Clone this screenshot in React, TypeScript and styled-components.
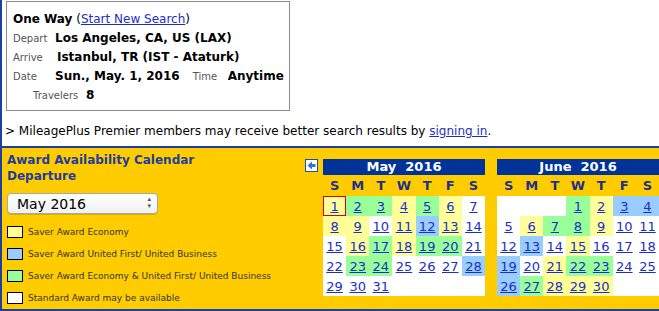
import React from 'react';
import styled, { createGlobalStyle } from 'styled-components';

const GlobalStyle = createGlobalStyle`
  html, body {
    margin: 0;
    padding: 0;
    background: #fff;
  }
  body {
    font-family: 'DejaVu Sans', Verdana, sans-serif;
    color: #000;
  }
`;

type Tone = 'y' | 'g' | 'b' | 'w';

const toneColor: Record<Tone, string> = {
  y: '#ffff99',
  g: '#99ff99',
  b: '#99ccff',
  w: '#ffffff',
};

interface MonthData {
  title: string;
  offset: number;
  days: Tone[];
  selected?: number;
}

const may: MonthData = {
  title: 'May\u00a0\u00a02016',
  offset: 0,
  selected: 1,
  days: [
    'y', 'g', 'g', 'y', 'g', 'y', 'w',
    'y', 'y', 'w', 'y', 'b', 'y', 'w',
    'w', 'y', 'g', 'y', 'g', 'g', 'w',
    'w', 'g', 'g', 'w', 'w', 'w', 'b',
    'w', 'w', 'w',
  ],
};

const june: MonthData = {
  title: 'June\u00a0\u00a02016',
  offset: 3,
  days: [
    'g', 'y', 'b', 'b',
    'w', 'y', 'g', 'g', 'y', 'w', 'w',
    'w', 'b', 'w', 'y', 'w', 'w', 'w',
    'b', 'w', 'y', 'g', 'g', 'w', 'w',
    'b', 'g', 'y', 'y', 'y',
  ],
};

const legend: { tone: Tone; label: string }[] = [
  { tone: 'y', label: 'Saver Award Economy' },
  { tone: 'b', label: 'Saver Award United First/ United Business' },
  { tone: 'g', label: 'Saver Award Economy & United First/ United Business' },
  { tone: 'w', label: 'Standard Award may be available' },
];

const weekDays = ['S', 'M', 'T', 'W', 'T', 'F', 'S'];

const Month: React.FC<{ data: MonthData }> = ({ data }) => {
  const blanks = Array.from({ length: data.offset });
  return (
    <MonthTable>
      <MonthHeader>{data.title}</MonthHeader>
      <WeekRow>
        {weekDays.map((d, i) => (
          <WeekDay key={i}>{d}</WeekDay>
        ))}
      </WeekRow>
      <DayGrid>
        {blanks.map((_, i) => (
          <DayCell key={'b' + i} $tone="w" />
        ))}
        {data.days.map((tone, i) => (
          <DayCell key={i} $tone={tone} $selected={data.selected === i + 1}>
            <DayLink href="#">{i + 1}</DayLink>
          </DayCell>
        ))}
      </DayGrid>
    </MonthTable>
  );
};

const PrevIcon = () => (
  <svg width="13" height="13" viewBox="0 0 13 13">
    <rect x="0.5" y="0.5" width="12" height="12" fill="#ffffff" stroke="#1f4fae" />
    <path d="M2.5 6.5 L7 2.5 L7 5 L10.5 5 L10.5 8 L7 8 L7 10.5 Z" fill="#2f6fd6" />
  </svg>
);

const App: React.FC = () => {
  return (
    <Page>
      <GlobalStyle />
      <SummaryBox>
        <Line>
          <Strong>One Way</Strong>
          <span>
            &nbsp;(<BlueLink href="#">Start New Search</BlueLink>)
          </span>
        </Line>
        <Line>
          <Label $width={42}>Depart</Label>
          <Strong>Los Angeles, CA, US (LAX)</Strong>
        </Line>
        <Line>
          <Label $width={44}>Arrive</Label>
          <Strong>Istanbul, TR (IST - Ataturk)</Strong>
        </Line>
        <Line>
          <Label $width={42}>Date</Label>
          <Strong>Sun., May. 1, 2016</Strong>
          <Label $width={35} $indent={13}>Time</Label>
          <Strong>Anytime</Strong>
        </Line>
        <Line>
          <Label $width={53} $indent={20}>Travelers</Label>
          <Strong>8</Strong>
        </Line>
      </SummaryBox>

      <Notice>
        &gt; MileagePlus Premier members may receive better search results by{' '}
        <BlueLink href="#">signing in</BlueLink>.
      </Notice>

      <Panel>
        <LeftColumn>
          <Title>
            Award Availability Calendar
            <br />
            Departure
          </Title>
          <SelectWrap>
            <MonthSelect defaultValue="May 2016">
              <option>May 2016</option>
              <option>June 2016</option>
            </MonthSelect>
            <SelectArrows>
              <span>▴</span>
              <span>▾</span>
            </SelectArrows>
          </SelectWrap>
          <Legend>
            {legend.map(item => (
              <LegendRow key={item.label}>
                <Swatch $tone={item.tone} />
                <span>{item.label}</span>
              </LegendRow>
            ))}
          </Legend>
        </LeftColumn>
        <Calendars>
          <IconSlot>
            <PrevIcon />
          </IconSlot>
          <Month data={may} />
          <Month data={june} />
        </Calendars>
      </Panel>
    </Page>
  );
};

export default App;

const Page = styled.div`
  min-height: 311px;
  border-left: 2px solid #1f3fa0;
  box-sizing: border-box;
  overflow: hidden;
`;

const SummaryBox = styled.div`
  width: 284px;
  box-sizing: border-box;
  margin: 1px 0 0 4px;
  padding: 8px 0 5px 6px;
  border: 1px solid #8c8c8c;
`;

const Line = styled.div`
  display: flex;
  align-items: baseline;
  height: 19px;
  line-height: 19px;
  font-size: 12px;
  white-space: nowrap;
`;

const Strong = styled.span`
  font-weight: bold;
  font-size: 12px;
`;

const Label = styled.span<{ $width: number; $indent?: number }>`
  display: inline-block;
  width: ${p => p.$width}px;
  margin-left: ${p => p.$indent || 0}px;
  font-size: 10px;
  color: #555;
`;

const BlueLink = styled.a`
  color: #1a2ec9;
  text-decoration: underline;
`;

const Notice = styled.div`
  margin-top: 12px;
  padding-left: 3px;
  font-size: 12px;
  line-height: 16px;
  white-space: nowrap;
`;

const Panel = styled.div`
  display: flex;
  margin-top: 7px;
  height: 165px;
  box-sizing: border-box;
  background: #ffcc00;
  border-top: 2px solid #1f3fa0;
  border-bottom: 2px solid #1f3fa0;
`;

const LeftColumn = styled.div`
  width: 298px;
  padding: 4px 0 0 5px;
`;

const Title = styled.div`
  font-size: 12px;
  line-height: 16px;
  font-weight: bold;
  color: #1d3c9e;
`;

const SelectWrap = styled.div`
  position: relative;
  width: 151px;
  margin-top: 9px;
`;

const MonthSelect = styled.select`
  appearance: none;
  display: block;
  width: 151px;
  height: 21px;
  padding: 0 0 0 9px;
  border: 1px solid #a8a8a8;
  border-radius: 4px;
  background: linear-gradient(#ffffff, #f1f1f1);
  font-family: 'DejaVu Sans', Verdana, sans-serif;
  font-size: 14px;
  color: #000;
  box-shadow: 0 1px 0 rgba(0, 0, 0, 0.15);
`;

const SelectArrows = styled.span`
  position: absolute;
  right: 7px;
  top: 3px;
  display: flex;
  flex-direction: column;
  font-size: 7px;
  line-height: 7px;
  color: #555;
  pointer-events: none;
`;

const Legend = styled.div`
  margin-top: 7px;
`;

const LegendRow = styled.div`
  display: flex;
  align-items: center;
  height: 22px;
  gap: 5px;
  font-size: 9px;
  color: #333;
`;

const Swatch = styled.span<{ $tone: Tone }>`
  width: 14px;
  height: 10px;
  border: 1px solid #000;
  background: ${p => toneColor[p.$tone]};
`;

const Calendars = styled.div`
  display: flex;
  align-items: flex-start;
  padding-top: 11px;
  gap: 12px;
`;

const IconSlot = styled.div`
  display: flex;
  margin-right: -7px;
  height: 13px;
`;

const MonthTable = styled.div`
  width: 162px;
`;

const MonthHeader = styled.div`
  height: 16px;
  line-height: 16px;
  background: #003399;
  color: #fff;
  text-align: center;
  font-weight: bold;
  font-size: 13px;
`;

const WeekRow = styled.div`
  display: grid;
  grid-template-columns: repeat(7, 1fr);
  height: 21px;
  align-items: center;
`;

const WeekDay = styled.div`
  text-align: center;
  font-size: 13px;
  font-weight: bold;
  color: #1f2f8a;
`;

const DayGrid = styled.div`
  display: grid;
  grid-template-columns: repeat(7, 1fr);
  grid-auto-rows: 20px;
  height: 100px;
  background: #fff;
`;

const DayCell = styled.div<{ $tone: Tone; $selected?: boolean }>`
  display: flex;
  align-items: center;
  justify-content: center;
  background: ${p => toneColor[p.$tone]};
  box-shadow: ${p => (p.$selected ? 'inset 0 0 0 1px #e00000' : 'none')};
`;

const DayLink = styled.a`
  color: #1a2ec9;
  font-size: 13px;
  text-decoration: underline;
`;
